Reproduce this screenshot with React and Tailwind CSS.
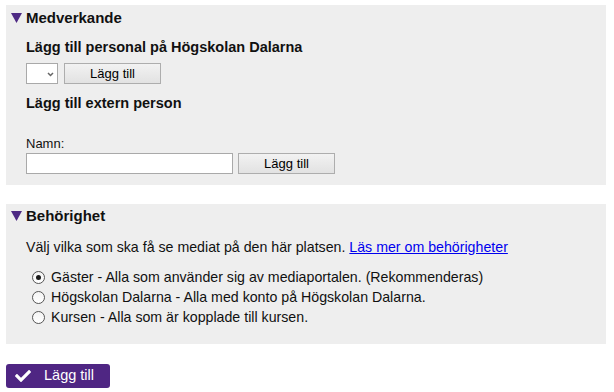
import { FaCheck } from "react-icons/fa";

function Arrow() {
  return (
    <svg width="11" height="10" viewBox="0 0 11 10" className="shrink-0">
      <polygon points="0,0 11,0 5.5,10" fill="#4e2a84" />
    </svg>
  );
}

function GrayButton({ children }) {
  return (
    <button className="h-[21px] w-[97px] border border-[#adadad] bg-gradient-to-b from-[#f2f2f2] to-[#e2e2e2] text-[13px] leading-[15px] text-black">
      {children}
    </button>
  );
}

function Radio({ checked, children }) {
  return (
    <label className="flex h-[20px] items-center">
      <span className="ml-[6px] mr-[6px] flex h-[13px] w-[13px] items-center justify-center rounded-full border border-[#555] bg-gradient-to-b from-[#f4f4f4] to-white">
        {checked && <span className="h-[5px] w-[5px] rounded-full bg-[#1a1a1a]" />}
      </span>
      <span className="text-[14.2px] leading-[16px]">{children}</span>
    </label>
  );
}

export default function App() {
  return (
    <div className="w-[614px] h-[392px] bg-white pt-[5px] px-[6px] text-[#111] font-['Liberation_Sans',Arial,sans-serif]">
      <div className="w-[600px] bg-[#eeeeee] pt-[4px] pb-[11px]">
        <div className="flex items-center gap-[4px] pl-[5px] text-[15px] leading-[17px] font-bold">
          <Arrow />
          <span>Medverkande</span>
        </div>
        <div className="pl-[20px]">
          <div className="mt-[13px] text-[14.5px] leading-[17px] font-bold">
            Lägg till personal på Högskolan Dalarna
          </div>
          <div className="mt-[7px] flex gap-[6px]">
            <div className="relative h-[21px] w-[32px] border border-[#a9a9a9] bg-white">
              <svg width="7" height="5" viewBox="0 0 7 5" className="absolute left-[20px] top-[8px]">
                <polyline points="1,1 3.5,3.5 6,1" fill="none" stroke="#666" strokeWidth="1.5" />
              </svg>
            </div>
            <GrayButton>Lägg till</GrayButton>
          </div>
          <div className="mt-[11px] text-[14.5px] leading-[17px] font-bold">
            Lägg till extern person
          </div>
          <div className="mt-[24px] text-[13px] leading-[15px]">Namn:</div>
          <div className="mt-[2px] flex gap-[5px]">
            <input className="h-[21px] w-[207px] border border-[#a9a9a9] bg-white outline-none" />
            <GrayButton>Lägg till</GrayButton>
          </div>
        </div>
      </div>

      <div className="mt-[19px] w-[600px] bg-[#eeeeee] pt-[3px] pb-[17px]">
        <div className="flex items-center gap-[4px] pl-[5px] text-[15px] leading-[17px] font-bold">
          <Arrow />
          <span>Behörighet</span>
        </div>
        <div className="pl-[20px]">
          <div className="mt-[15px] text-[14.2px] leading-[16px]">
            Välj vilka som ska få se mediat på den här platsen.{" "}
            <a href="#" className="text-[#0000ee] underline">Läs mer om behörigheter</a>
          </div>
          <div className="mt-[12px] flex flex-col">
            <Radio checked>Gäster - Alla som använder sig av mediaportalen. (Rekommenderas)</Radio>
            <Radio>Högskolan Dalarna - Alla med konto på Högskolan Dalarna.</Radio>
            <Radio>Kursen - Alla som är kopplade till kursen.</Radio>
          </div>
        </div>
      </div>

      <button className="mt-[20px] flex h-[24px] w-[104px] items-center rounded-[3px] bg-[#4f2683] pl-[9px] text-[14.5px] text-white">
        <FaCheck size={16} />
        <span className="ml-[13px]">Lägg till</span>
      </button>
    </div>
  );
}
